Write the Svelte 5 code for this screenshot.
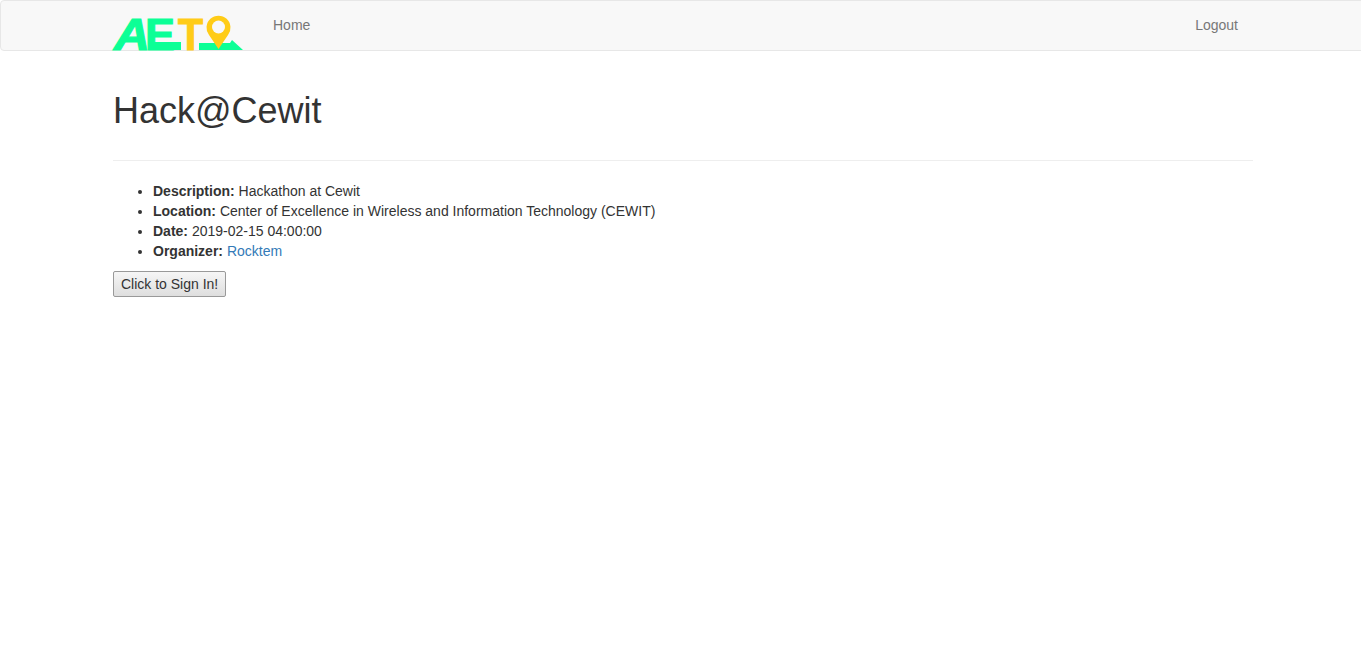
<script>
  const details = [
    { label: 'Description:', text: 'Hackathon at Cewit' },
    { label: 'Location:', text: 'Center of Excellence in Wireless and Information Technology (CEWIT)' },
    { label: 'Date:', text: '2019-02-15 04:00:00' },
    { label: 'Organizer:', link: 'Rocktem' }
  ];
</script>

<nav class="navbar">
  <div class="nav-inner">
    <a class="brand" href="#home" aria-label="Aeto">
      <svg width="130" height="36" viewBox="0 0 130 36">
        <text class="logo-letter italic green" x="1" y="35.500" textLength="36" lengthAdjust="spacingAndGlyphs">A</text>
        <text class="logo-letter green" x="32" y="35.500" textLength="30" lengthAdjust="spacingAndGlyphs">E</text>
        <rect x="36" y="28" width="32" height="8" fill="#0cff96" />
        <text class="logo-letter yellow" x="65" y="35.500" textLength="25" lengthAdjust="spacingAndGlyphs">T</text>
        <polygon points="86,36 86,29 117,29 119,26 130,36" fill="#0cff96" />
        <path d="M105.500 35 L96 21 A12 12 0 1 1 115 21 Z" fill="#ffcc17" />
        <circle cx="105.500" cy="13" r="6.500" fill="#f8f8f8" />
      </svg>
    </a>
    <a class="nav-link" href="#home">Home</a>
    <a class="nav-link logout" href="#logout">Logout</a>
  </div>
</nav>

<main class="container">
  <h1>Hack@Cewit</h1>
  <hr />
  <ul>
    {#each details as d}
      <li>
        <b>{d.label}</b>
        {#if d.link}<a href="#org">{d.link}</a>{:else}{d.text}{/if}
      </li>
    {/each}
  </ul>
  <button type="button">Click to Sign In!</button>
</main>

<style>
  :global(body) {
    font-family: "Liberation Sans", Arial, sans-serif;
    font-size: 14px;
    line-height: 20px;
    color: #333;
    background: #fff;
    overflow: hidden;
  }

  .navbar {
    box-sizing: border-box;
    width: 1366px;
    height: 51px;
    background: #f8f8f8;
    border: 1px solid #e7e7e7;
    border-radius: 4px;
  }

  .nav-inner {
    display: flex;
    align-items: flex-start;
    width: 1140px;
    height: 50px;
    margin-left: 112px;
  }

  .brand {
    display: block;
    width: 130px;
    height: 50px;
    padding-top: 13px;
    box-sizing: border-box;
    margin-right: 15px;
  }

  .brand svg {
    display: block;
    overflow: visible;
  }

  .logo-letter {
    font-family: "Liberation Sans", Arial, sans-serif;
    font-weight: 700;
    font-size: 45px;
    stroke-width: 1.2px;
  }

  .green {
    fill: #0cff96;
    stroke: #0cff96;
  }

  .yellow {
    fill: #ffcc17;
    stroke: #ffcc17;
  }

  .italic {
    font-style: italic;
  }

  .nav-link {
    padding: 14px 15px;
    color: #777;
    text-decoration: none;
  }

  .logout {
    margin-left: auto;
  }

  .container {
    width: 1140px;
    margin-left: 113px;
  }

  h1 {
    margin: 40px 0 20px;
    padding-bottom: 9px;
    font-size: 36px;
    font-weight: 500;
    line-height: 39.6px;
    color: #333;
  }

  hr {
    margin: 0 0 20px;
    border: 0;
    border-top: 1px solid #eee;
  }

  ul {
    margin: 0 0 10px;
    padding-left: 40px;
  }

  a {
    color: #337ab7;
    text-decoration: none;
  }

  button {
    display: block;
    box-sizing: border-box;
    height: 26px;
    padding: 1px 7px;
    font-family: inherit;
    font-size: 14px;
    line-height: 20px;
    color: #333;
    background: linear-gradient(#f6f6f6, #dedede);
    border: 1px solid #999;
    border-radius: 2px;
  }
</style>
